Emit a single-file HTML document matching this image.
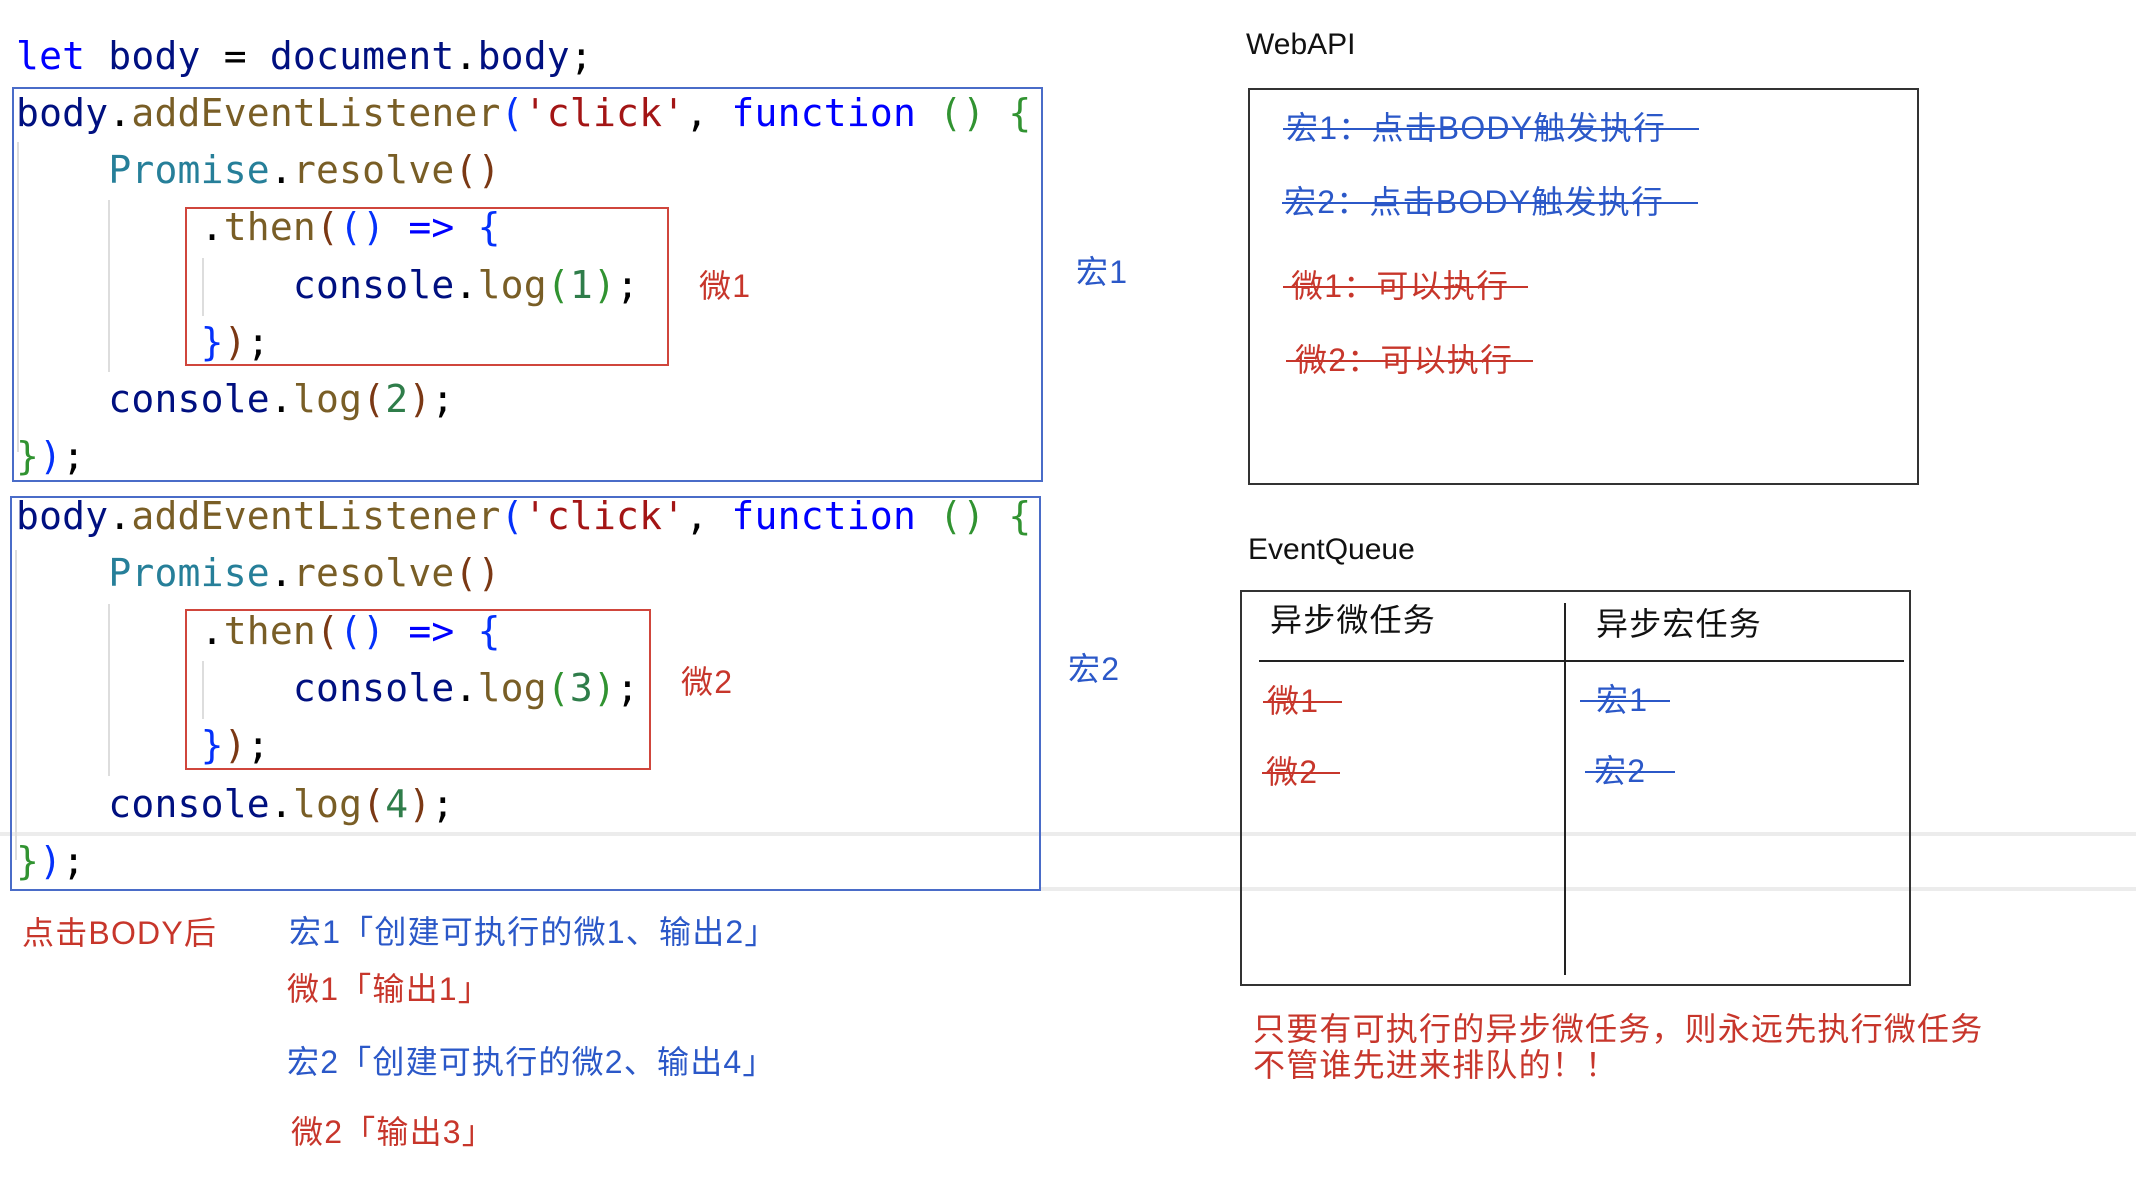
<!DOCTYPE html>
<html><head><meta charset="utf-8"><style>
*{margin:0;padding:0;box-sizing:border-box}
body{width:2136px;height:1178px;background:#fff;position:relative;overflow:hidden;font-family:"Liberation Sans","Noto Sans CJK SC",sans-serif}
.a{position:absolute}
.c{position:absolute;font-family:"DejaVu Sans Mono","Liberation Mono",monospace;font-size:38px;letter-spacing:0.2px;line-height:57px;white-space:pre;color:#001080}
.k{color:#0000ff}.f{color:#795e26}.s{color:#a31515}.b1{color:#0431fa}.b2{color:#319331}.b3{color:#7b3814}.t{color:#267f99}.n{color:#2f7d4a}.p{color:#000}
.cj{position:absolute;font-size:32px;line-height:40px;white-space:pre;letter-spacing:1.2px}
.bl{color:#2b58c8}.rd{color:#c7362b}
.hl{position:absolute;height:2px}
</style></head><body>
<div class="a" style="left:0;top:832px;width:2136px;height:4px;background:#ececec"></div>
<div class="a" style="left:1040px;top:887px;width:1096px;height:4px;background:#ececec"></div>

<div class="a" style="left:12px;top:87px;width:1031px;height:395px;border:2px solid #4a6cc8"></div>
<div class="a" style="left:10px;top:496px;width:1031px;height:395px;border:2px solid #4a6cc8"></div>
<div class="a" style="left:185px;top:207px;width:484px;height:159px;border:2px solid #d0463c"></div>
<div class="a" style="left:185px;top:609px;width:466px;height:161px;border:2px solid #d0463c"></div>
<div class="a" style="left:17px;top:142px;width:2px;height:310px;background:#ddd"></div>
<div class="a" style="left:108px;top:200px;width:2px;height:172px;background:#ddd"></div>
<div class="a" style="left:202px;top:258px;width:2px;height:58px;background:#ddd"></div>
<div class="a" style="left:15px;top:550px;width:2px;height:310px;background:#ddd"></div>
<div class="a" style="left:108px;top:604px;width:2px;height:172px;background:#ddd"></div>
<div class="a" style="left:202px;top:661px;width:2px;height:58px;background:#ddd"></div>

<div class="c" style="left:16px;top:28px"><span class="k">let</span> body <span class="p">=</span> document<span class="p">.</span>body<span class="p">;</span></div>
<div class="c" style="left:16px;top:85px">body<span class="p">.</span><span class="f">addEventListener</span><span class="b1">(</span><span class="s">'click'</span><span class="p">,</span> <span class="k">function</span> <span class="b2">()</span> <span class="b2">{</span></div>
<div class="c" style="left:16px;top:142px">    <span class="t">Promise</span><span class="p">.</span><span class="f">resolve</span><span class="b3">()</span></div>
<div class="c" style="left:16px;top:199px">        <span class="p">.</span><span class="f">then</span><span class="b3">(</span><span class="b1">()</span> <span class="k">=&gt;</span> <span class="b1">{</span></div>
<div class="c" style="left:16px;top:257px">            console<span class="p">.</span><span class="f">log</span><span class="b2">(</span><span class="n">1</span><span class="b2">)</span><span class="p">;</span></div>
<div class="c" style="left:16px;top:314px">        <span class="b1">}</span><span class="b3">)</span><span class="p">;</span></div>
<div class="c" style="left:16px;top:371px">    console<span class="p">.</span><span class="f">log</span><span class="b3">(</span><span class="n">2</span><span class="b3">)</span><span class="p">;</span></div>
<div class="c" style="left:16px;top:428px"><span class="b2">}</span><span class="b1">)</span><span class="p">;</span></div>
<div class="c" style="left:16px;top:488px">body<span class="p">.</span><span class="f">addEventListener</span><span class="b1">(</span><span class="s">'click'</span><span class="p">,</span> <span class="k">function</span> <span class="b2">()</span> <span class="b2">{</span></div>
<div class="c" style="left:16px;top:545px">    <span class="t">Promise</span><span class="p">.</span><span class="f">resolve</span><span class="b3">()</span></div>
<div class="c" style="left:16px;top:603px">        <span class="p">.</span><span class="f">then</span><span class="b3">(</span><span class="b1">()</span> <span class="k">=&gt;</span> <span class="b1">{</span></div>
<div class="c" style="left:16px;top:660px">            console<span class="p">.</span><span class="f">log</span><span class="b2">(</span><span class="n">3</span><span class="b2">)</span><span class="p">;</span></div>
<div class="c" style="left:16px;top:717px">        <span class="b1">}</span><span class="b3">)</span><span class="p">;</span></div>
<div class="c" style="left:16px;top:776px">    console<span class="p">.</span><span class="f">log</span><span class="b3">(</span><span class="n">4</span><span class="b3">)</span><span class="p">;</span></div>
<div class="c" style="left:16px;top:833px"><span class="b2">}</span><span class="b1">)</span><span class="p">;</span></div>

<div class="cj rd" style="left:699px;top:266px">微1</div>
<div class="cj bl" style="left:1076px;top:252px">宏1</div>
<div class="cj rd" style="left:681px;top:662px">微2</div>
<div class="cj bl" style="left:1068px;top:649px">宏2</div>

<div class="a" style="left:1246px;top:27px;font-size:30px;line-height:36px;color:#111">WebAPI</div>
<div class="a" style="left:1248px;top:88px;width:671px;height:397px;border:2px solid #333"></div>
<div class="cj bl" style="left:1286px;top:108px">宏1：点击BODY触发执行</div>
<div class="hl" style="left:1283px;top:128px;width:416px;background:#2b58c8"></div>
<div class="cj bl" style="left:1284px;top:182px">宏2：点击BODY触发执行</div>
<div class="hl" style="left:1282px;top:202px;width:416px;background:#2b58c8"></div>
<div class="cj rd" style="left:1291px;top:266px">微1：可以执行</div>
<div class="hl" style="left:1283px;top:286px;width:245px;background:#c7362b"></div>
<div class="cj rd" style="left:1295px;top:340px">微2：可以执行</div>
<div class="hl" style="left:1286px;top:360px;width:247px;background:#c7362b"></div>

<div class="a" style="left:1248px;top:532px;font-size:30px;line-height:36px;color:#111">EventQueue</div>
<div class="a" style="left:1240px;top:590px;width:671px;height:396px;border:2px solid #333"></div>
<div class="a" style="left:1564px;top:603px;width:2px;height:372px;background:#222"></div>
<div class="a" style="left:1259px;top:660px;width:645px;height:2px;background:#222"></div>
<div class="cj" style="left:1270px;top:600px;color:#111">异步微任务</div>
<div class="cj" style="left:1596px;top:604px;color:#111">异步宏任务</div>
<div class="cj rd" style="left:1267px;top:681px">微1</div>
<div class="hl" style="left:1263px;top:701px;width:79px;background:#c7362b"></div>
<div class="cj rd" style="left:1266px;top:752px">微2</div>
<div class="hl" style="left:1262px;top:772px;width:78px;background:#c7362b"></div>
<div class="cj bl" style="left:1596px;top:680px">宏1</div>
<div class="hl" style="left:1580px;top:700px;width:90px;background:#2b58c8"></div>
<div class="cj bl" style="left:1594px;top:751px">宏2</div>
<div class="hl" style="left:1585px;top:771px;width:90px;background:#2b58c8"></div>

<div class="cj rd" style="left:1253px;top:1011px;line-height:36px">只要有可执行的异步微任务，则永远先执行微任务
不管谁先进来排队的！！</div>

<div class="cj rd" style="left:22px;top:913px">点击BODY后</div>
<div class="cj bl" style="left:289px;top:912px">宏1「创建可执行的微1、输出2」</div>
<div class="cj rd" style="left:287px;top:969px">微1「输出1」</div>
<div class="cj bl" style="left:287px;top:1042px">宏2「创建可执行的微2、输出4」</div>
<div class="cj rd" style="left:291px;top:1112px">微2「输出3」</div>
</body></html>
